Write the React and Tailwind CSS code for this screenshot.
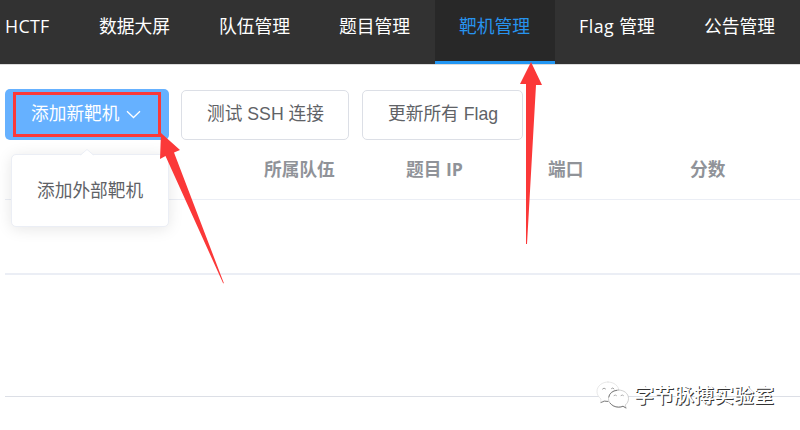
import React from "react";

const tabs = [
  { label: "数据大屏", width: "w-[120px]" },
  { label: "队伍管理", width: "w-[120px]" },
  { label: "题目管理", width: "w-[120px]" },
  { label: "靶机管理", width: "w-[120px]", active: true },
  { latin: "Flag ", label: "管理", width: "w-[125px]" },
  { label: "公告管理", width: "w-[120px]" },
];

const columns = ["所属队伍", "题目 IP", "端口", "分数"];

function NavBar() {
  return (
    <nav className="flex h-[65px] shrink-0 border-b border-[#dcdcdc] bg-[#323232] font-['Open_Sans','Noto_Sans_CJK_SC',sans-serif] text-[17.8px] text-white">
      <div className="w-[75px] shrink-0 pl-[5px] leading-[53px] tracking-[0.3px]">HCTF</div>
      {tabs.map((t) => (
        <div
          key={t.label + t.width}
          className={`${t.width} shrink-0 whitespace-pre pl-6 leading-[53px] ${
            t.active ? "border-b-3 border-[#2196f3] bg-[#282828] text-[#2793ee]" : ""
          }`}
        >
          {t.latin && <span className="tracking-[0.5px]">{t.latin}</span>}
          {t.label}
        </div>
      ))}
    </nav>
  );
}

function DropdownMenu() {
  return (
    <div className="absolute left-[6px] top-[65px] flex h-[73px] w-[158px] items-center rounded-[5px] border border-[#ebeef5] bg-white pl-[25px] text-[#606266] shadow-[0_2px_15px_rgba(0,0,0,0.1)]">
      <svg className="absolute -top-[6px] left-[68px]" width="14" height="7" viewBox="0 0 14 7">
        <path d="M0 7L7 0.5L14 7Z" fill="#fff" />
        <path d="M0.5 6L7 0.5L13.5 6" fill="none" stroke="#ebeef5" />
      </svg>
      <span className="whitespace-nowrap pt-[2px]">添加外部靶机</span>
    </div>
  );
}

function Toolbar() {
  return (
    <div className="flex h-[51px] items-end pl-[5px] text-[17.7px] leading-none text-[#606266]">
      <div className="relative mr-3 flex h-[51px] w-[164px] items-center rounded-[5px] bg-[#66b1ff] pl-[26px] text-white">
        <span className="whitespace-nowrap">添加新靶机</span>
        <svg className="ml-[7px]" width="15" height="9" viewBox="0 0 15 9">
          <path d="M1 1.2L7.5 7.5L14 1.2" fill="none" stroke="#fff" strokeWidth="1.3" />
        </svg>
        <DropdownMenu />
      </div>
      <div className="mr-[13px] flex h-[50px] w-[168px] items-center whitespace-nowrap rounded-[5px] border border-[#dcdfe6] pb-px pl-[25px]">
        测试 SSH 连接
      </div>
      <div className="flex h-[50px] w-[161px] items-center whitespace-nowrap rounded-[5px] border border-[#dcdfe6] pb-px pl-[25px]">
        更新所有 Flag
      </div>
    </div>
  );
}

function Table() {
  return (
    <div className="ml-[5px]">
      <div className="flex h-[60px] border-b border-[#ebeef5] pl-[259px] font-['Open_Sans','Noto_Sans_CJK_SC',sans-serif] text-[17.7px] font-bold leading-[58px] text-[#909399]">
        {columns.map((c) => (
          <div key={c} className="w-[142px] shrink-0 whitespace-nowrap">
            {c}
          </div>
        ))}
      </div>
      <div className="h-[75px] border-b-2 border-[#ebeef5]" />
      <div className="h-[122px] border-b border-[#dcdfe6]" />
    </div>
  );
}

function Annotations() {
  return (
    <svg className="pointer-events-none absolute left-0 top-0" width="800" height="430">
      <rect x="14.5" y="93.5" width="145" height="42" fill="none" stroke="#fb3838" strokeWidth="3" />
      <path d="M161 133L180 150L174 152.5L224 283.5L223 283L165.5 156L160 159Z" fill="#fb3838" />
      <path d="M531 62L542 85L536 85L527 244L526 244L526 84L520 84Z" fill="#fb3838" />
    </svg>
  );
}

function Watermark() {
  return (
    <div className="absolute left-[596px] top-[379px] flex items-center">
      <svg width="34" height="30" viewBox="0 0 34 30" strokeLinecap="round" strokeLinejoin="round">
        <path
          d="M12 2C6 2 1 6 1 11.5C1 14.5 2.5 17 5 19L4.5 22.5L8 20.5C9.5 21 11 21 12 21C18 21 23 17 23 11.5C23 6 18 2 12 2Z"
          fill="#fff"
          stroke="#dedede"
          strokeWidth="0.7"
        />
        <path d="M6.5 9Q8 7 9.5 8.8M15.5 8.5Q17 7 18 8.8" fill="none" stroke="#888" strokeWidth="0.8" />
        <path
          d="M22.5 10C17 10 12.5 13.5 12.5 18.5S17 27 22.5 27C24 27 25.5 26.8 27 26L30 28L29.3 25C31.3 23.3 32.5 21.2 32.5 18.5C32.5 13.5 28 10 22.5 10Z"
          fill="#fff"
          stroke="#bbb"
          strokeWidth="0.7"
        />
        <path d="M5 22.5L8.5 21.2L12 21.5M14 23Q17 27 22.5 27.2Q25 27.2 27 26.3L30 28M12.8 17Q14 11 21 10.3" fill="none" stroke="#666" strokeWidth="0.8" />
        <path d="M18 15.5Q19.5 14.3 20.5 15.5M25 15.5Q26.5 14.3 27.5 15.5" fill="none" stroke="#999" strokeWidth="0.8" />
      </svg>
      <span className="ml-[4px] whitespace-nowrap pt-[2px] text-[20px] font-medium leading-[30px] text-white [text-shadow:1px_1px_0.5px_#333]">
        字节脉搏实验室
      </span>
    </div>
  );
}

export default function App() {
  return (
    <div className="relative flex h-[430px] w-[800px] flex-col overflow-hidden bg-white font-['Liberation_Sans','Noto_Sans_CJK_SC',sans-serif]">
      <NavBar />
      <main className="pt-6">
        <Toolbar />
        <Table />
      </main>
      <Annotations />
      <Watermark />
    </div>
  );
}
